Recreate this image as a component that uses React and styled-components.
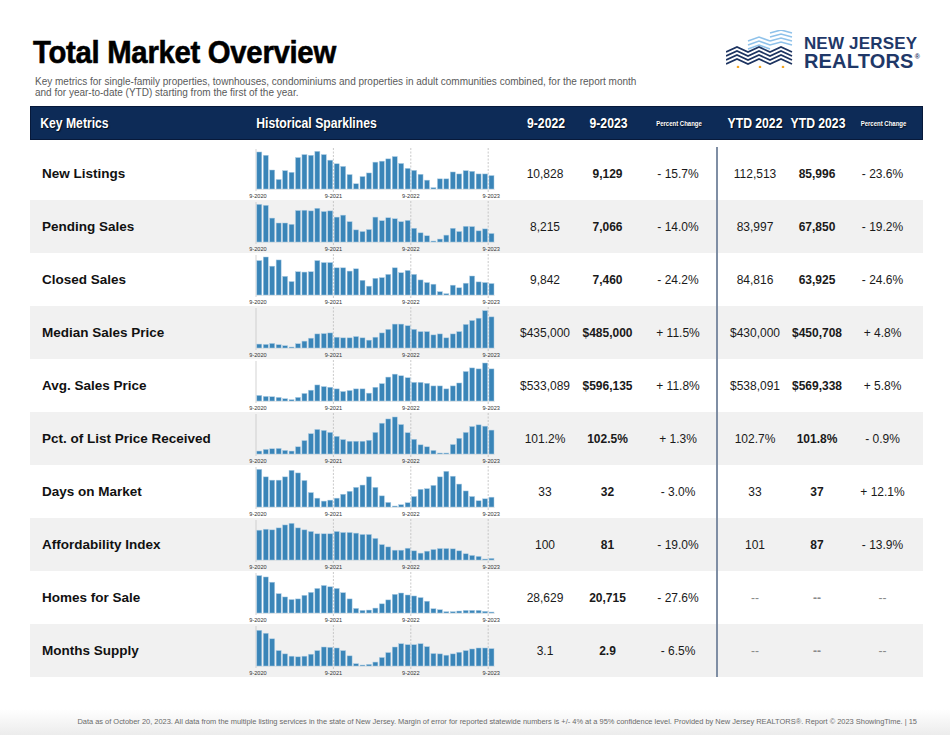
import React from 'react';
import styled, { createGlobalStyle } from 'styled-components';

const heavy = `"Liberation Sans", Arial, sans-serif`;
const columns = '216px 269px 60px 65px 76px 76px 50px 81px';

const GlobalStyle = createGlobalStyle`
  html, body {
    margin: 0;
    padding: 0;
    background: #fff;
  }
  body {
    font-family: "Liberation Sans", Arial, sans-serif;
    color: #222;
  }
`;

const Page = styled.div`
  width: 950px;
  height: 735px;
  display: flex;
  flex-direction: column;
  overflow: hidden;
`;

const TopRow = styled.div`
  display: flex;
  justify-content: space-between;
  align-items: flex-start;
  padding: 30px 30px 0 33px;
`;

const TitleBlock = styled.div`
  display: flex;
  flex-direction: column;
`;

// no condensed face is installed, so the heading is narrowed by hand
const Title = styled.h1`
  margin: 6px 0 0;
  font-family: ${heavy};
  font-size: 32px;
  line-height: 32px;
  font-weight: 700;
  color: #000;
  letter-spacing: -0.3px;
  white-space: nowrap;
  transform: scaleX(0.915);
  transform-origin: left center;
  -webkit-text-stroke: 0.6px #000;
`;

const Subtitle = styled.p`
  margin: 8px 0 0 2px;
  font-size: 10px;
  line-height: 11px;
  color: #5a5a5a;
  white-space: nowrap;
`;

const Logo = styled.div`
  display: flex;
  align-items: flex-start;
  gap: 8px;
`;

const LogoText = styled.div`
  display: flex;
  flex-direction: column;
  padding-top: 5px;
  color: #1f3868;
  font-weight: 700;
`;

const LogoLine = styled.span`
  font-size: ${p => p.$size}px;
  line-height: ${p => p.$lh}px;
  letter-spacing: 0.2px;
  white-space: nowrap;
`;

const Reg = styled.span`
  font-size: 7px;
  position: relative;
  top: -9px;
  margin-left: 1px;
`;

const Table = styled.div`
  margin: 8px 27px 0 30px;
  display: flex;
  flex-direction: column;
`;

const HeadBar = styled.div`
  display: grid;
  grid-template-columns: ${columns};
  height: 34px;
  align-items: center;
  background: #0d2b57;
  border: 1px solid #07193a;
  box-sizing: border-box;
  margin-bottom: 7px;
`;

const HeadCell = styled.div`
  display: flex;
  justify-content: ${p => (p.$left ? 'flex-start' : 'center')};
  padding-left: ${p => (p.$left ? '11px' : '0')};
  white-space: nowrap;
  font-family: ${heavy};
  font-weight: 700;
  font-size: ${p => (p.$small ? '7.5px' : '14.5px')};
  color: #fff;
  text-shadow: 1px 1px 1px rgba(0, 0, 0, 0.7);
  transform: scaleX(${p => (p.$small ? 0.8 : 0.84)});
  transform-origin: ${p => (p.$left ? 'left center' : 'center')};
`;

const Row = styled.div`
  display: grid;
  grid-template-columns: ${columns};
  height: 53px;
  background: ${p => (p.$shaded ? '#f1f1f1' : '#fff')};
`;

const LabelCell = styled.div`
  display: flex;
  align-items: center;
  padding-left: 12px;
  font-size: 13.5px;
  font-weight: 700;
  color: #111;
  white-space: nowrap;
`;

const SparkCell = styled.div`
  display: flex;
`;

const ValueCell = styled.div`
  display: flex;
  align-items: center;
  justify-content: center;
  white-space: nowrap;
  font-size: 12px;
  font-weight: ${p => (p.$bold ? 700 : 400)};
  color: ${p => (p.$muted ? '#8a8a8a' : '#1a1a1a')};
  border-left: ${p => (p.$divider ? '2px solid #7f8ea4' : 'none')};
`;

const Footer = styled.div`
  flex: 1;
  display: flex;
  justify-content: flex-end;
  align-items: flex-start;
  padding: 40px 33px 0 0;
  font-size: 7.45px;
  color: #6a6a6a;
  white-space: nowrap;
  background: linear-gradient(to bottom, #fff 55%, #ececec 100%);
`;

const BAR_STEP = 6.45;
const AXIS_X = 10;
const TOP = 4;
const BASE = 42;

const Sparkline = ({ data }) => {
  const max = 116;
  const grids = [12, 24, 36].map(m => AXIS_X + m * BAR_STEP);
  const labels = [
    ['9-2020', 12],
    ['9-2021', grids[0]],
    ['9-2022', grids[1]],
    ['9-2023', grids[2] + 3],
  ];
  return (
    <svg width="269" height="53" viewBox="0 0 269 53">
      <line x1={AXIS_X} y1="2" x2={AXIS_X} y2={BASE + 2} stroke="#c8c8c8" strokeWidth="0.8" />
      <line x1={AXIS_X} y1={BASE + 0.5} x2={AXIS_X + 37 * BAR_STEP} y2={BASE + 0.5} stroke="#dcdcdc" strokeWidth="0.6" />
      {grids.map(x => (
        <line key={x} x1={x} y1="1" x2={x} y2={BASE + 3} stroke="#bdbdbd" strokeWidth="0.8" strokeDasharray="2 1.5" />
      ))}
      {data.map((v, i) => {
        const h = Math.max(1, (v / max) * (BASE - TOP));
        return (
          <rect
            key={i}
            x={AXIS_X + 0.8 + i * BAR_STEP}
            y={BASE - h}
            width="5"
            height={h}
            fill="#3a85b8"
            stroke="#aecde4"
            strokeWidth="0.5"
          />
        );
      })}
      {labels.map(([t, x]) => (
        <text key={t} x={x} y="51" fontSize="5.6" textAnchor="middle" fill="#333" fontFamily="Liberation Sans, Arial, sans-serif">
          {t}
        </text>
      ))}
    </svg>
  );
};

const LogoMark = () => (
  <svg width="70" height="38" viewBox="0 0 70 38">
    <g fill="none" stroke="#8fc2ea" strokeWidth="1.6">
      <polyline points="44,3 55,0 66,3" />
      <polyline points="44,7 55,4 66,7" />
      <polyline points="44,11 55,8 66,11" />
      <polyline points="22,11 33,7 44,11" />
      <polyline points="22,15 33,11 44,15 55,12 66,15" />
      <polyline points="22,19 33,15 44,19" />
    </g>
    <g fill="none" stroke="#1d3461" strokeWidth="1.8">
      <polyline points="0,22 11,17 22,22 33,17 44,22 55,17 66,22" />
      <polyline points="0,26 11,21 22,26 33,21 44,26 55,21 66,26" />
      <polyline points="0,30 11,25 22,30 33,25 44,30 55,25 66,30" />
      <polyline points="0,34 11,29 22,34 33,29 44,34 55,29 66,34" />
    </g>
    <g fill="#f5a623">
      <circle cx="12" cy="37" r="1.3" />
      <circle cx="34" cy="37" r="1.3" />
      <circle cx="57" cy="37" r="1.3" />
    </g>
  </svg>
);

const metrics = [
  {
    name: 'New Listings',
    values: ['10,828', '9,129', '- 15.7%', '112,513', '85,996', '- 23.6%'],
    spark: [113, 103, 58, 29, 56, 51, 96, 105, 103, 115, 105, 88, 77, 69, 44, 16, 38, 49, 82, 85, 92, 99, 78, 63, 57, 45, 27, 4, 31, 31, 52, 46, 56, 54, 46, 46, 41],
  },
  {
    name: 'Pending Sales',
    values: ['8,215', '7,066', '- 14.0%', '83,997', '67,850', '- 19.2%'],
    spark: [115, 112, 73, 58, 58, 54, 96, 97, 95, 103, 93, 95, 76, 82, 62, 37, 32, 38, 76, 65, 74, 71, 62, 66, 42, 28, 19, 3, 9, 21, 42, 32, 48, 47, 34, 40, 26],
  },
  {
    name: 'Closed Sales',
    values: ['9,842', '7,460', '- 24.2%', '84,816', '63,925', '- 24.6%'],
    spark: [105, 116, 88, 107, 57, 41, 71, 70, 71, 105, 99, 99, 83, 83, 73, 80, 45, 27, 51, 53, 63, 83, 68, 75, 63, 46, 38, 33, 10, 4, 30, 22, 36, 58, 40, 38, 35],
  },
  {
    name: 'Median Sales Price',
    values: ['$435,000', '$485,000', '+ 11.5%', '$430,000', '$450,708', '+ 4.8%'],
    spark: [12, 11, 14, 10, 7, 2, 13, 21, 30, 43, 44, 46, 33, 31, 31, 35, 31, 24, 33, 46, 57, 73, 73, 68, 57, 50, 50, 40, 43, 31, 43, 50, 72, 84, 91, 114, 95],
  },
  {
    name: 'Avg. Sales Price',
    values: ['$533,089', '$596,135', '+ 11.8%', '$538,091', '$569,338', '+ 5.8%'],
    spark: [17, 14, 13, 11, 7, 4, 11, 23, 33, 49, 44, 42, 37, 29, 32, 37, 37, 24, 42, 53, 73, 82, 77, 71, 57, 57, 54, 46, 46, 37, 46, 55, 90, 101, 98, 116, 98],
  },
  {
    name: 'Pct. of List Price Received',
    values: ['101.2%', '102.5%', '+ 1.3%', '102.7%', '101.8%', '- 0.9%'],
    spark: [9, 14, 16, 17, 11, 9, 22, 41, 62, 75, 72, 66, 54, 44, 39, 39, 39, 42, 66, 94, 107, 113, 90, 65, 45, 28, 22, 11, 1, 2, 29, 48, 66, 84, 89, 85, 73],
  },
  {
    name: 'Days on Market',
    values: ['33', '32', '- 3.0%', '33', '37', '+ 12.1%'],
    spark: [115, 92, 82, 82, 92, 112, 104, 81, 44, 27, 18, 21, 27, 39, 48, 60, 67, 92, 60, 34, 14, 2, 7, 13, 32, 54, 56, 66, 92, 109, 94, 70, 49, 32, 19, 25, 30],
  },
  {
    name: 'Affordability Index',
    values: ['100', '81', '- 19.0%', '101', '87', '- 13.9%'],
    spark: [91, 94, 92, 98, 107, 112, 98, 92, 87, 80, 80, 80, 87, 84, 84, 82, 78, 78, 66, 47, 40, 30, 30, 36, 28, 21, 27, 32, 35, 35, 34, 28, 19, 14, 11, 1, 5],
  },
  {
    name: 'Homes for Sale',
    values: ['28,629', '20,715', '- 27.6%', '--', '--', '--'],
    spark: [114, 110, 94, 59, 49, 41, 43, 54, 63, 75, 84, 80, 75, 62, 43, 14, 8, 9, 15, 28, 40, 57, 61, 55, 52, 47, 36, 13, 10, 4, 4, 6, 8, 8, 8, 5, 2],
  },
  {
    name: 'Months Supply',
    values: ['3.1', '2.9', '- 6.5%', '--', '--', '--'],
    spark: [109, 100, 83, 47, 37, 30, 28, 30, 36, 47, 58, 57, 55, 47, 31, 7, 2, 5, 12, 26, 41, 58, 68, 65, 65, 68, 59, 38, 37, 33, 37, 42, 47, 52, 55, 55, 53],
  },
];

const App = () => (
  <Page>
    <GlobalStyle />
    <TopRow>
      <TitleBlock>
        <Title>Total Market Overview</Title>
        <Subtitle>
          Key metrics for single-family properties, townhouses, condominiums and properties in adult communities combined, for the report month
          <br />
          and for year-to-date (YTD) starting from the first of the year.
        </Subtitle>
      </TitleBlock>
      <Logo>
        <LogoMark />
        <LogoText>
          <LogoLine $size={17} $lh={17}>NEW JERSEY</LogoLine>
          <LogoLine $size={20} $lh={19}>
            REALTORS<Reg>®</Reg>
          </LogoLine>
        </LogoText>
      </Logo>
    </TopRow>

    <Table>
      <HeadBar>
        <HeadCell $left>Key Metrics</HeadCell>
        <HeadCell $left>Historical Sparklines</HeadCell>
        <HeadCell>9-2022</HeadCell>
        <HeadCell>9-2023</HeadCell>
        <HeadCell $small>Percent Change</HeadCell>
        <HeadCell>YTD 2022</HeadCell>
        <HeadCell>YTD 2023</HeadCell>
        <HeadCell $small>Percent Change</HeadCell>
      </HeadBar>

      {metrics.map((m, idx) => (
        <Row key={m.name} $shaded={idx % 2 === 1}>
          <LabelCell>{m.name}</LabelCell>
          <SparkCell>
            <Sparkline data={m.spark} />
          </SparkCell>
          {m.values.map((v, i) => (
            <ValueCell
              key={i}
              $bold={i === 1 || i === 4}
              $divider={i === 3}
              $muted={v === '--'}
            >
              {v}
            </ValueCell>
          ))}
        </Row>
      ))}
    </Table>

    <Footer>
      Data as of October 20, 2023. All data from the multiple listing services in the state of New Jersey. Margin of error for reported statewide numbers is +/- 4% at a 95% confidence level. Provided by New Jersey REALTORS®. Report © 2023 ShowingTime. | 15
    </Footer>
  </Page>
);

export default App;
